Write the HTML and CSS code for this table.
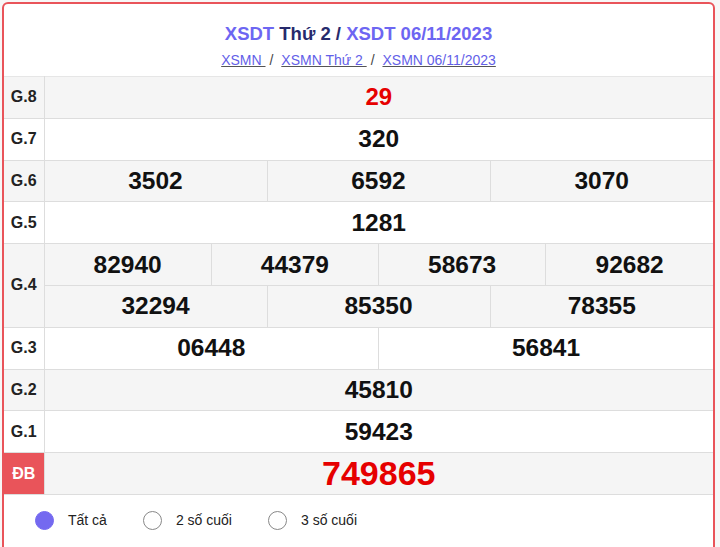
FILE: index.html
```html
<!DOCTYPE html>
<html lang="vi">
<head>
<meta charset="utf-8">
<link rel="stylesheet" href="styles.css">
</head>
<body>
<div class="box">
  <div class="head">
    <h2 class="title"><a class="hl">XSDT</a> Thứ 2 / <a class="hl">XSDT 06/11/2023</a></h2>
    <div class="crumbs"><a>XSMN </a> / <a>XSMN Thứ 2 </a> / <a>XSMN 06/11/2023</a></div>
  </div>
  <table class="kq">
    <colgroup>
      <col class="c-lbl"><col><col><col><col><col><col><col><col><col><col><col><col>
    </colgroup>
    <tr class="g"><td class="lbl">G.8</td><td colspan="12" class="red">29</td></tr>
    <tr><td class="lbl">G.7</td><td colspan="12">320</td></tr>
    <tr class="g"><td class="lbl">G.6</td><td colspan="4">3502</td><td colspan="4">6592</td><td colspan="4">3070</td></tr>
    <tr><td class="lbl">G.5</td><td colspan="12">1281</td></tr>
    <tr class="g"><td class="lbl" rowspan="2">G.4</td><td colspan="3">82940</td><td colspan="3">44379</td><td colspan="3">58673</td><td colspan="3">92682</td></tr>
    <tr class="g"><td colspan="4">32294</td><td colspan="4">85350</td><td colspan="4">78355</td></tr>
    <tr><td class="lbl">G.3</td><td colspan="6">06448</td><td colspan="6">56841</td></tr>
    <tr class="g"><td class="lbl">G.2</td><td colspan="12">45810</td></tr>
    <tr><td class="lbl">G.1</td><td colspan="12">59423</td></tr>
    <tr class="g"><td class="lbl db">ĐB</td><td colspan="12" class="red big">749865</td></tr>
  </table>
  <div class="opts">
    <label class="opt"><span class="radio on"></span>Tất cả</label>
    <label class="opt"><span class="radio"></span>2 số cuối</label>
    <label class="opt"><span class="radio"></span>3 số cuối</label>
  </div>
</div>
</body>
</html>
```
FILE: styles.css
```css
html, body { margin: 0; padding: 0; }
body {
  background: #f7f7f7;
  font-family: "Liberation Sans", Arial, sans-serif;
  padding: 2px 0 0 2px;
}
.box {
  width: 709px;
  border: 2px solid #e9545a;
  border-radius: 6px;
  background: #fff;
  height: 560px;
}
.head { text-align: center; padding-top: 19px; height: 53px; }
.title {
  margin: 0;
  font-size: 18.5px;
  font-weight: bold;
  color: #272a6c;
  line-height: 22px;
}
.title .hl { color: #6d66f2; }
.crumbs {
  margin-top: 7px;
  font-size: 14px;
  line-height: 16px;
  color: #444;
}
.crumbs a {
  color: #6360e8;
  text-decoration: underline;
  text-decoration-color: #555;
  margin: 0 4px;
}
.kq {
  width: 709px;
  border-collapse: collapse;
  table-layout: fixed;
}
.c-lbl { width: 40px; }
.kq td {
  border: 1px solid #dddddd;
  height: 40.8px;
  padding: 0;
  text-align: center;
  font-weight: bold;
  font-size: 24.5px;
  color: #111;
}
.kq tr:first-child td { border-top-color: #e6e6e6; }
.kq td:first-child { border-left: none; }
.kq td:last-child { border-right: none; }
.kq tr.g td { background: #f5f5f5; }
.kq td.lbl {
  font-size: 16px;
  color: #222;
}
.kq td.red { color: #e60000; font-size: 24px; }
.kq td.big { font-size: 34px; }
.kq tr.g td.db {
  background: #e9545a;
  color: #fff;
}
.opts {
  display: flex;
  align-items: center;
  padding: 16px 0 0 31px;
}
.opt {
  display: flex;
  align-items: center;
  font-size: 14px;
  color: #222;
  margin-right: 36px;
}
.radio {
  border: 1px solid #888;
  border-radius: 50%;
  margin-right: 14px;
  box-sizing: border-box;
  width: 19px;
  height: 19px;
  background: #fff;
}
.radio.on { background: #7469f0; border-color: #7469f0; }
```
